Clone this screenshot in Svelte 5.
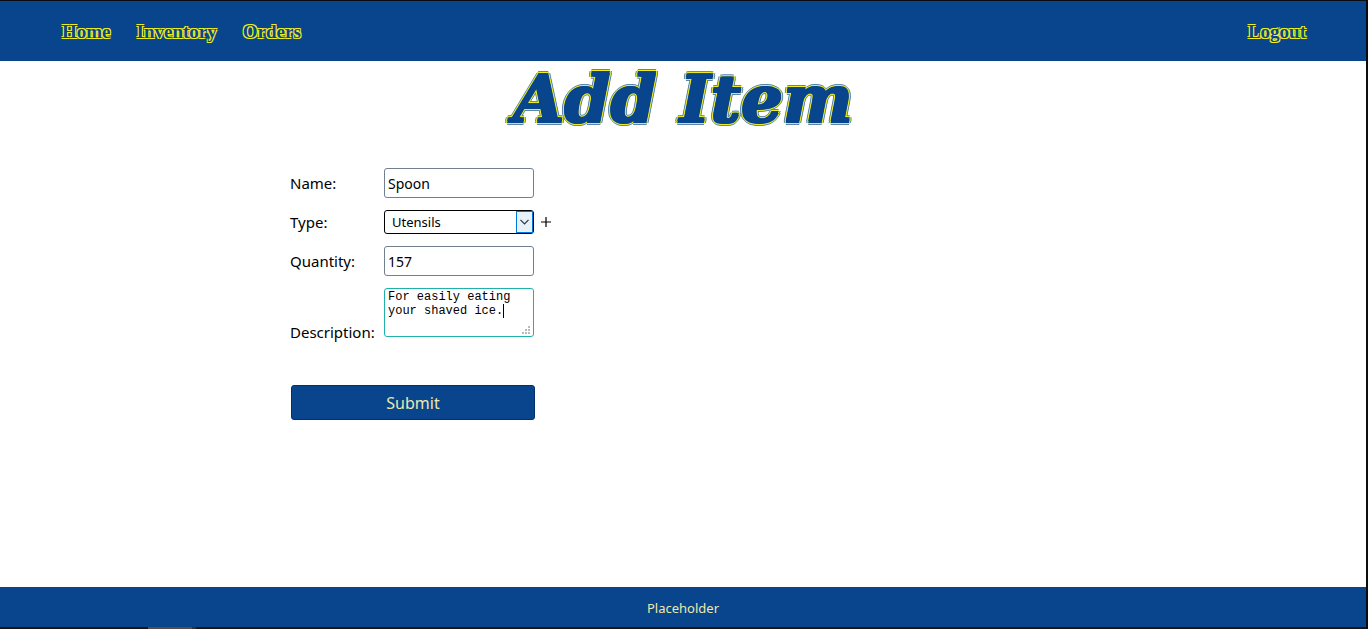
<script>
  const links = ['Home', 'Inventory', 'Orders'];
  const types = ['Utensils', 'Cups', 'Syrups'];
  let name = $state('Spoon');
  let type = $state('Utensils');
  let quantity = $state('157');
  let description = $state('For easily eating your shaved ice.');
</script>

<div class="page">
  <header>
    <nav>
      {#each links as link}
        <a href="#{link.toLowerCase()}">{link}</a>
      {/each}
    </nav>
    <a href="#logout">Logout</a>
  </header>

  <main>
    <h1>Add Item</h1>
    <form onsubmit={(e) => e.preventDefault()}>
      <div class="row">
        <label for="name">Name:</label>
        <input id="name" type="text" bind:value={name} />
      </div>
      <div class="row">
        <label for="type">Type:</label>
        <div class="picker">
          <select id="type" bind:value={type}>
            {#each types as option}
              <option>{option}</option>
            {/each}
          </select>
          <span class="arrow" aria-hidden="true">
            <svg viewBox="0 0 9 6" width="9" height="6"><path d="M0.5 0.8 4.5 4.8 8.5 0.8" fill="none" stroke="#333" stroke-width="1.2" /></svg>
          </span>
        </div>
        <button class="add" type="button" aria-label="Add type">
          <svg viewBox="0 0 10 10" width="10" height="10"><path d="M5 0V10M0 5H10" stroke="#000" stroke-width="1.2" /></svg>
        </button>
      </div>
      <div class="row">
        <label for="quantity">Quantity:</label>
        <input id="quantity" type="text" inputmode="numeric" bind:value={quantity} />
      </div>
      <div class="row last">
        <label for="description">Description:</label>
        <div class="area">
          <textarea id="description" bind:value={description}></textarea>
          <span class="caret" aria-hidden="true"></span>
          <svg class="grip" viewBox="0 0 8 8" width="8" height="8" fill="#bbb" aria-hidden="true">
            <path d="M6 0h2v2h-2zM3 3h2v2h-2zM6 3h2v2h-2zM0 6h2v2h-2zM3 6h2v2h-2zM6 6h2v2h-2z" />
          </svg>
        </div>
      </div>
      <button class="submit" type="submit">Submit</button>
    </form>
  </main>

  <footer>Placeholder</footer>
  <div class="edge"></div>
</div>

<style>
  :global(body) {
    margin: 0;
    background: #fff;
  }
  .page {
    box-sizing: border-box;
    min-height: 100vh;
    display: flex;
    flex-direction: column;
    border: solid #0b0d10;
    border-width: 1px 2px 0 0;
    font-family: 'Noto Sans', sans-serif;
    font-size: 15px;
    color: #000;
  }
  header {
    box-sizing: border-box;
    display: flex;
    align-items: center;
    justify-content: space-between;
    height: 60px;
    padding: 2px 60px 0 62px;
    background: #08458c;
  }
  nav {
    display: flex;
    gap: 26px;
  }
  header a {
    font: bold 19px/24px 'Liberation Serif', serif;
    color: #08458c;
    text-decoration: none;
    text-shadow: -1px -1px 0 #ee2, 1px -1px 0 #ee2, -1px 1px 0 #ee2, 1px 1px 0 #ee2;
  }
  main {
    flex: 1;
  }
  h1 {
    margin: 0;
    text-align: center;
    font: italic bold 66px/76px 'DejaVu Serif', serif;
    color: #08458c;
    text-shadow:
      -1px -1px 0 #08458c, 1px -1px 0 #08458c, -1px 1px 0 #08458c, 1px 1px 0 #08458c,
      -2px -1px 0 #ee2, 2px -1px 0 #ee2, -2px 1px 0 #ee2, 2px 1px 0 #ee2,
      -1px -2px 0 #ee2, 1px -2px 0 #ee2, -1px 2px 0 #ee2, 1px 2px 0 #ee2,
      -3px -1px 0 #5a86a8, 3px -1px 0 #5a86a8, -3px 1px 0 #5a86a8, 3px 1px 0 #5a86a8,
      -1px -3px 0 #5a86a8, 1px -3px 0 #5a86a8, -1px 3px 0 #5a86a8, 1px 3px 0 #5a86a8;
  }
  form {
    display: flex;
    flex-direction: column;
    align-items: flex-start;
    gap: 12px;
    width: 786px;
    max-width: 100%;
    margin: 31px auto 0;
  }
  .row {
    display: flex;
    align-items: center;
  }
  label {
    width: 94px;
    line-height: 18px;
  }
  input,
  select,
  textarea {
    box-sizing: border-box;
    display: block;
    width: 150px;
    margin: 0;
    border: 1px solid #708090;
    border-radius: 3px;
    background: #fff;
    color: #000;
    outline: none;
  }
  input {
    height: 30px;
    padding: 0 3px;
    font: 14px 'Noto Sans', sans-serif;
  }
  .picker,
  .area {
    position: relative;
  }
  select {
    appearance: none;
    height: 24px;
    padding: 0 20px 0 7px;
    border-color: #000;
    font: 13px 'Noto Sans', sans-serif;
  }
  .arrow {
    position: absolute;
    inset: 1px 1px 1px auto;
    box-sizing: border-box;
    display: flex;
    align-items: center;
    justify-content: center;
    width: 17px;
    border: 1px solid #0078d7;
    background: #e5f1fb;
    pointer-events: none;
  }
  .add {
    display: flex;
    margin-left: 7px;
    padding: 0;
    border: 0;
    background: none;
  }
  .last {
    align-items: flex-end;
  }
  .last label {
    line-height: 10px;
  }
  textarea {
    height: 49px;
    padding: 1px 3px;
    border-color: #20b2aa;
    font: 12px/14px 'Liberation Mono', monospace;
    resize: none;
    overflow: hidden;
  }
  .caret {
    position: absolute;
    left: 119px;
    top: 16px;
    width: 1px;
    height: 14px;
    background: #000;
  }
  .grip {
    position: absolute;
    right: 4px;
    bottom: 3px;
  }
  .submit {
    width: 244px;
    height: 35px;
    margin: 36px 0 0 1px;
    padding: 0;
    border: 1px solid #043069;
    border-radius: 3px;
    background: #08458c;
    color: #eee8aa;
    font: 16px 'Noto Sans', sans-serif;
  }
  footer {
    box-sizing: border-box;
    display: flex;
    align-items: center;
    justify-content: center;
    height: 40px;
    padding-top: 2px;
    background: #08458c;
    color: #eee8aa;
    font-size: 13px;
  }
  .edge {
    height: 2px;
    background: linear-gradient(90deg, #1a1410 148px, #5a4c44 148px 192px, #3a302a 192px 196px, #1a1612 196px);
  }
</style>
